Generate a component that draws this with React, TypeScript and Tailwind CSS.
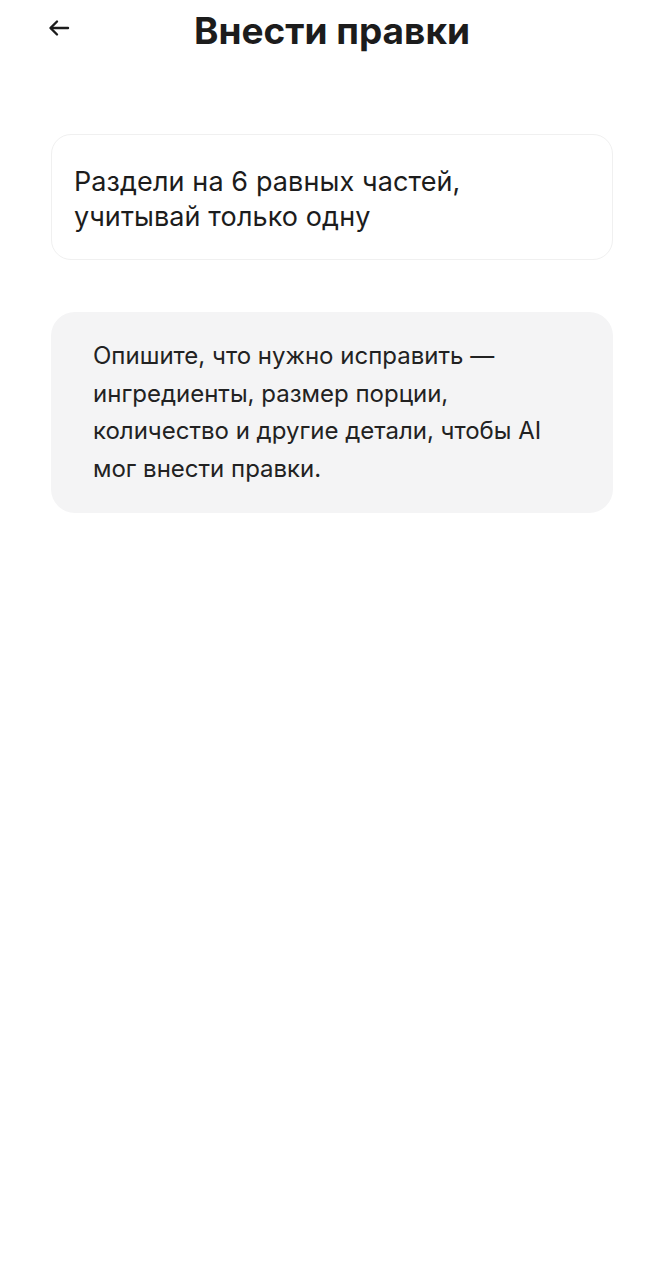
export default function App() {
  return (
    <div className="min-h-[1280px] bg-white font-['Inter',sans-serif] text-[#1c1c1c]">
      <header className="relative flex h-[60px] items-center justify-center">
        <button className="absolute left-[48px] top-[18px] flex h-[20px] w-[22px] items-center justify-center">
          <svg width="22" height="18" viewBox="0 0 22 18" fill="none" stroke="#1c1c1c" strokeWidth="2.4" strokeLinecap="round" strokeLinejoin="round">
            <path d="M20 9H3" />
            <path d="M9 2.5L2.5 9L9 15.5" />
          </svg>
        </button>
        <h1 className="text-[37px] font-bold leading-none">Внести правки</h1>
      </header>

      <div className="flex flex-col gap-[52px] px-[51px] pt-[74px]">
        <div className="rounded-[20px] border border-[#f0f0f0] px-[22px] pt-[29px] pb-[25px] text-[27px] leading-[35px] tracking-[0.1px]">
          Раздели на 6 равных частей,
          <br />
          учитывай только одну
        </div>

        <div className="rounded-[24px] bg-[#f4f4f5] px-[42px] pt-[25px] pb-[26px] text-[24px] leading-[37.5px] text-[#222]">
          Опишите, что нужно исправить —
          <br />
          ингредиенты, размер порции,
          <br />
          количество и другие детали, чтобы AI
          <br />
          мог внести правки.
        </div>
      </div>
    </div>
  )
}
